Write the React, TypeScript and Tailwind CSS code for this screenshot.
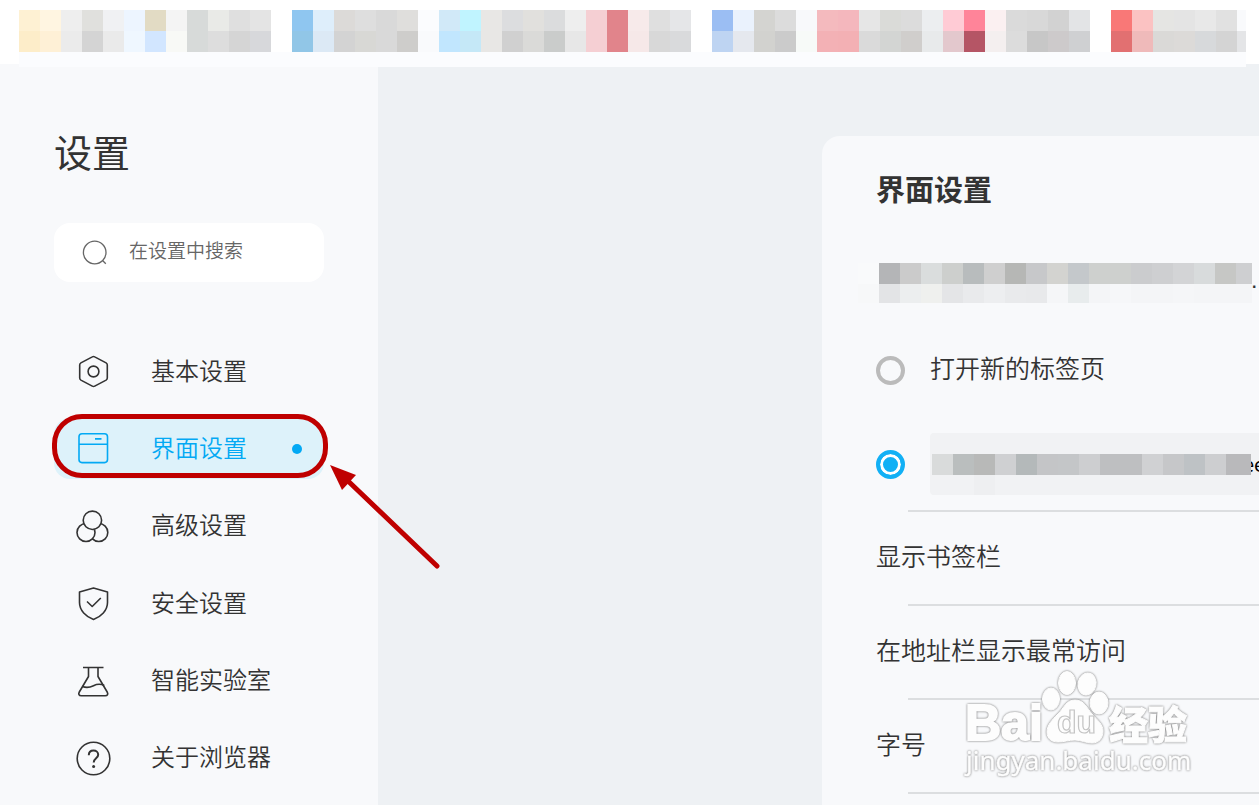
import React, { useState } from 'react';

type IconProps = { className?: string };
type NavItem = { id: string; label: string; Icon: React.FC<IconProps> };

const CELL = 21;

const toolbarRows = [
  'fef1d3 fff5e1 eeeeee e0e0dd f0f1f3 edf5ff e2dbc4 f4f4f4 d7dad9 e9eae7 dfdfdf e4e4e4 ffffff 8fc6f0 deeefb dcdad8 dedede d9d9d9 dfdedc fbfcfe d1e9f8 c0f4ff e8e7e5 dcdddf e1e0dd dbdcdd eeeeee f5cfd3 e1848b f7eaea dfdfdf e5e6e8 ffffff 9bbef3 eaf2fd d4d4d1 dcdcdc f8f9fb f4babe f4b7bd e6e6e6 dadbd8 dcdcdc eceef0 ffcbd5 ff8499 fbf0f1 dadada d8d8d8 d2d2d2 e3e4e6 ffffff f97877 fbc2c2 e5e5e3 e4e4e4 e8e8e8 e1e1e1 f9fafc',
  'fdedc9 fef0d6 ebebeb d4d4d4 eaeaea eff7ff d2e6ff f8f9f6 d7dad9 dddddd d5d5d5 d7d8db ffffff 91c6e7 dce9f5 d3d3d3 d8d8d5 d9d9d9 cecdcb f9fafc c1e6fe c5e8f7 e8e7e5 d0d0d0 dadad8 cacccb e7e7e7 f5cfd3 e1848b f6e8e8 d8d8d8 d9dadc ffffff bed4f2 e5e8ee d2d2cf cbcbcb f7faf8 f3b1b5 f3b0b4 dadada d3d5d3 d0cecc e8eaeb e3c8cd b55565 f4efef dcdcdc c7c7c7 cdcacb cfd0d2 ffffff e27071 efbaba dad9d7 dcdad8 d7d9db d4d4d4 e4e5e7',
];

const homeRows = [
  'f9fafb b4b5b7 cbcbcb dadddd cdcfcd b8bcbd cfcfcf b6b7b5 c7c8ca d3d3d0 c4c8cb ced0ce ced0ce cbccce cecfd1 d3d4d6 d8dbdc c6c7c5 cecfd1',
  'f7f8f9 e3e4e6 eceeef eff0ee e4e5e7 e9eaec edeef0 e9eaec e8e9eb f5f6f8 e8eced f4f5f7 f6f7f9 f4f5f7 f4f5f7 f5f6f8 f4f5f7 f4f5f7 f4f5f7',
];

const urlRows = [
  'f1f2f4 f1f2f4 f1f2f4 f1f2f4 f1f2f4 f1f2f4 f1f2f4 f1f2f4 f1f2f4 f1f2f4 f1f2f4 f1f2f4 f1f2f4 f1f2f4 f1f2f4 f1f2f4',
  'd9dbdb babebe b8b9b8 cfd0d2 b4b9ba c4c5c7 c4c6c8 cdced0 bebfc1 bebfc1 d0d1d3 c6c7c9 bec2c5 cdced0 b9b9bb b9b9bb',
  'f1f2f4 f1f2f4 eeeff1 f1f2f4 f1f2f4 f1f2f4 f1f2f4 f1f2f4 f1f2f4 f1f2f4 f1f2f4 f1f2f4 f1f2f4 f1f2f4 f1f2f4 f1f2f4',
];

const Mosaic: React.FC<{ rows: string[]; width: number; height: number; className?: string }> = ({
  rows,
  width,
  height,
  className,
}) => (
  <svg width={width} height={height} className={className} shapeRendering="crispEdges" aria-hidden="true">
    {rows.map((row, y) =>
      row.split(' ').map((color, x) => (
        <rect key={`${x}-${y}`} x={x * CELL} y={y * CELL} width={CELL} height={CELL} fill={`#${color}`} />
      ))
    )}
  </svg>
);

const Icon: React.FC<IconProps & { children: React.ReactNode }> = ({ className, children }) => (
  <svg
    width="35"
    height="35"
    viewBox="0 0 35 35"
    fill="none"
    stroke="currentColor"
    strokeWidth="1.6"
    strokeLinejoin="round"
    className={className}
    aria-hidden="true"
  >
    {children}
  </svg>
);

const BasicIcon: React.FC<IconProps> = (props) => (
  <Icon {...props}>
    <path d="M16.3 2.9q1.2-.7 2.4 0l11.4 6q1.2.7 1.2 2v13.2q0 1.3-1.2 2l-11.4 6q-1.2.7-2.4 0l-11.4-6q-1.2-.7-1.2-2V10.9q0-1.3 1.2-2z" />
    <circle cx="17.5" cy="17.5" r="5.4" />
  </Icon>
);

const InterfaceIcon: React.FC<IconProps> = (props) => (
  <Icon {...props}>
    <rect x="3" y="2.8" width="28.5" height="28.8" rx="3" />
    <path d="M3 13.2h28.5M19 7.9h6.5" />
  </Icon>
);

const AdvancedIcon: React.FC<IconProps> = (props) => (
  <Icon {...props}>
    <circle cx="22.8" cy="23.5" r="9" fill="#f8f9fb" />
    <circle cx="10" cy="23.5" r="9" fill="#f8f9fb" />
    <circle cx="16.4" cy="11.3" r="9.2" fill="#f8f9fb" />
  </Icon>
);

const SafetyIcon: React.FC<IconProps> = (props) => (
  <Icon {...props}>
    <path d="M17.5 2l14 4v10.5c0 8-6.5 14.2-14 17-7.5-2.8-14-9-14-17V6z" />
    <path d="M11 15.5l5.2 5 8.6-8.5" />
  </Icon>
);

const LabIcon: React.FC<IconProps> = (props) => (
  <Icon {...props}>
    <path d="M7 3.5h20.5M12.5 3.5v9L3.3 28c-1.2 2.2-.4 3.8 2 3.8h23.9c2.4 0 3.2-1.6 2-3.8L22 12.5v-9" />
    <path d="M6.5 22.5c4 1.6 7.8.8 11-.8 3.5-1.7 7-2 10.8-.2" />
  </Icon>
);

const AboutIcon: React.FC<IconProps> = (props) => (
  <Icon {...props}>
    <circle cx="17.5" cy="17.5" r="16.3" />
    <path d="M12.8 14.2c0-2.8 2-4.6 4.7-4.6s4.7 1.7 4.7 4.2c0 3.6-4.5 3.5-4.5 7.7" strokeWidth="2" />
    <circle cx="17.6" cy="25.5" r="1.5" fill="currentColor" stroke="none" />
  </Icon>
);

const navItems: NavItem[] = [
  { id: 'basic', label: '基本设置', Icon: BasicIcon },
  { id: 'interface', label: '界面设置', Icon: InterfaceIcon },
  { id: 'advanced', label: '高级设置', Icon: AdvancedIcon },
  { id: 'safety', label: '安全设置', Icon: SafetyIcon },
  { id: 'lab', label: '智能实验室', Icon: LabIcon },
  { id: 'about', label: '关于浏览器', Icon: AboutIcon },
];

const options = ['显示书签栏', '在地址栏显示最常访问', '字号'];

const Highlight = () => (
  <>
    <span className="pointer-events-none absolute -top-1 -left-[2px] -right-1 h-16 rounded-[30px] border-[5px] border-[#bf0000]" />
    <svg
      width="112"
      height="108"
      viewBox="0 0 112 108"
      className="pointer-events-none absolute left-[275px] top-[44px] z-10"
      aria-hidden="true"
    >
      <path d="M18 18L108 104" stroke="#bf0000" strokeWidth="5" strokeLinecap="round" />
      <path d="M1 3L27 13L13 28Z" fill="#bf0000" />
    </svg>
  </>
);

const Watermark = () => (
  <svg
    width="236"
    height="120"
    viewBox="0 0 236 120"
    className="pointer-events-none absolute left-[138px] top-[529px] drop-shadow-[0_0_1px_#707070]"
    fill="#fdfdfd"
    stroke="#fdfdfd"
    aria-hidden="true"
  >
    <ellipse cx="91" cy="34" rx="8.5" ry="11" />
    <ellipse cx="107" cy="18" rx="8.5" ry="11.5" />
    <ellipse cx="127" cy="19" rx="9" ry="11" transform="rotate(12 127 19)" />
    <ellipse cx="139" cy="38" rx="9" ry="11" />
    <path d="M115 35c-9 0-11 8-17 14s-11 11-11 18c0 7 5 10 11 10 6 0 11-2 17-2s11 3 17 3c7 0 11-5 11-12s-6-11-11-17-8-14-17-14z" />
    <g fontFamily="'Liberation Sans', Arial, sans-serif" fontWeight="700">
      <text x="5" y="75" fontSize="50" strokeWidth="2">Bai</text>
      <text x="97" y="68" fontSize="32" stroke="#c4c4c4" strokeWidth="1.2">du</text>
    </g>
    <text x="149" y="74" fontSize="39" fontWeight="900" fontFamily="'Noto Sans CJK SC', sans-serif">经验</text>
    <text x="6" y="105" fontSize="26" fontFamily="'Noto Sans', sans-serif" strokeWidth="0.4">
      jingyan.baidu.com
    </text>
  </svg>
);

export default function App() {
  const [active, setActive] = useState('interface');
  const [homepage, setHomepage] = useState('custom');

  return (
    <div className="flex min-h-screen flex-col overflow-hidden bg-[#eef1f4] font-['Liberation_Sans','Noto_Sans_CJK_SC',sans-serif] text-[#333]">
      <header className="h-16 bg-white pl-[19px] pr-[13px] pt-[10px]">
        <div className="relative h-[57px] overflow-hidden bg-[#fbfcfe]">
          <Mosaic rows={toolbarRows} width={1239} height={42} className="max-w-none" />
        </div>
      </header>

      <div className="flex flex-1">
        <aside className="w-[378px] shrink-0 bg-[#f8f9fb] pl-[54px] pr-[54px] pt-[66px]">
          <h1 className="text-[38px] leading-[48px]">设置</h1>

          <label className="mt-[45px] flex h-[59px] items-center rounded-2xl bg-white pl-7 text-[#666]">
            <svg width="28" height="28" viewBox="0 0 28 28" fill="none" stroke="currentColor" strokeWidth="1.3" aria-hidden="true">
              <circle cx="12.7" cy="13.5" r="11.3" />
              <path d="M20.5 21.5l3.3 3.3" />
            </svg>
            <input
              type="search"
              aria-label="在设置中搜索"
              placeholder="在设置中搜索"
              className="ml-[19px] w-0 flex-1 bg-transparent text-[19px] font-[350] outline-none placeholder:text-[#666]"
            />
          </label>

          <nav className="mt-[59px] flex h-[448px] flex-col justify-between">
            {navItems.map(({ id, label, Icon: ItemIcon }) => (
              <button
                key={id}
                onClick={() => setActive(id)}
                className={`relative flex h-[61px] w-[270px] items-center rounded-2xl pl-[22px] pr-[22px] text-left text-[24px] font-[350] ${
                  active === id ? 'bg-[#ddf2fa] text-[#03a9f4]' : ''
                }`}
              >
                <ItemIcon className="shrink-0" />
                <span className="ml-10 flex-1">{label}</span>
                {active === id && <span className="size-[10px] rounded-full bg-[#03a9f4]" />}
                {id === 'interface' && <Highlight />}
              </button>
            ))}
          </nav>
        </aside>

        <main className="flex min-w-0 flex-1 pl-[444px] pt-[72px]">
          <section className="relative min-w-0 flex-1 overflow-hidden rounded-tl-[18px] bg-[#f8f9fb] pl-[54px] pt-[35px]">
            <h2 className="text-[29px] font-bold leading-10">界面设置</h2>

            <div className="-ml-[18px] mt-[52px] flex h-10 items-center">
              <Mosaic rows={homeRows} width={394} height={40} className="shrink-0" />
              <span className="text-base font-bold leading-none">.</span>
            </div>

            <label className="mt-[47px] flex h-10 items-center whitespace-nowrap text-[25px] font-[350]">
              <input
                type="radio"
                name="homepage"
                checked={homepage === 'newtab'}
                onChange={() => setHomepage('newtab')}
                className="mr-[25px] size-[29px] shrink-0 appearance-none rounded-full border-4 border-[#bbb] checked:border-[#12b0f5] checked:bg-[#12b0f5] checked:shadow-[inset_0_0_0_3px_#fff]"
              />
              打开新的标签页
            </label>

            <div className="mt-[43px] flex h-[62px] items-center">
              <input
                type="radio"
                name="homepage"
                aria-label="自定义网页"
                checked={homepage === 'custom'}
                onChange={() => setHomepage('custom')}
                className="mr-[25px] size-[29px] shrink-0 appearance-none rounded-full border-4 border-[#bbb] checked:border-[#12b0f5] checked:bg-[#12b0f5] checked:shadow-[inset_0_0_0_3px_#fff]"
              />
              <div className="flex h-full min-w-0 flex-1 items-center overflow-hidden rounded-l bg-[#f1f2f4] pl-[2px]">
                <Mosaic rows={urlRows} width={319} height={62} className="relative shrink-0" />
                <input
                  type="text"
                  aria-label="网址"
                  defaultValue="ee"
                  className="-ml-2 w-10 shrink-0 bg-transparent font-['Noto_Sans_CJK_SC',sans-serif] text-xl text-black outline-none"
                />
              </div>
            </div>

            <hr className="ml-8 mt-[15px] border-t-2 border-[#dcdee0]" />
            {options.map((option) => (
              <React.Fragment key={option}>
                <div className="flex h-[92px] items-center whitespace-nowrap text-[25px] font-[350]">{option}</div>
                <hr className="ml-8 border-t-2 border-[#dcdee0]" />
              </React.Fragment>
            ))}

            <Watermark />
          </section>
        </main>
      </div>
    </div>
  );
}
